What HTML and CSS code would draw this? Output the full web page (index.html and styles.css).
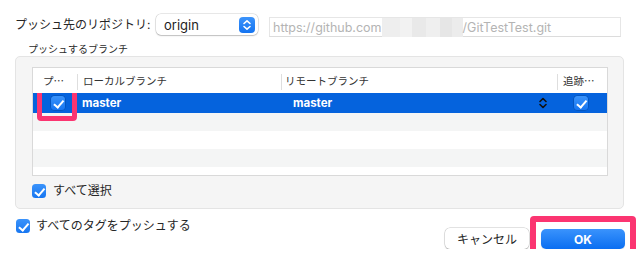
FILE: index.html
```html
<!DOCTYPE html>
<html lang="ja">
<head>
    <meta charset="UTF-8">
    <title>プッシュ</title>
    <link rel="stylesheet" href="styles.css">
</head>
<body>
    <div class="dialog">
        <div class="remote-row">
            <span class="label">プッシュ先のリポジトリ:</span>
            <div class="popup">
                <span>origin</span>
                <span class="stepper">
                    <svg width="16" height="16" viewBox="0 0 16 16">
                        <path d="M5 6.5 L8 3.8 L11 6.5 M5 9.5 L8 12.2 L11 9.5" fill="none" stroke="#fff" stroke-width="1.6" stroke-linecap="round" stroke-linejoin="round"/>
                    </svg>
                </span>
            </div>
            <div class="url-field">
                <span>https://github.com</span><span class="blur"></span><span>/GitTestTest.git</span>
            </div>
        </div>

        <div class="group-title">プッシュするブランチ</div>
        <div class="group">
            <div class="table">
                <div class="thead">
                    <div class="th">プ⋯</div>
                    <div class="th sep">ローカルブランチ</div>
                    <div class="th sep">リモートブランチ</div>
                    <div class="th sep">追跡⋯</div>
                </div>
                <div class="tbody">
                    <div class="tr selected">
                        <div class="td check-cell">
                            <span class="checkbox"></span>
                            <span class="mark mark-small"></span>
                        </div>
                        <div class="td name">master</div>
                        <div class="td name remote">
                            <span class="remote-name">master</span>
                            <svg width="8" height="12" viewBox="0 0 8 12">
                                <path d="M1 4.5 L4 1.5 L7 4.5 M1 7.5 L4 10.5 L7 7.5" fill="none" stroke="#111" stroke-width="1.6" stroke-linecap="round" stroke-linejoin="round"/>
                            </svg>
                        </div>
                        <div class="td check-cell track">
                            <span class="checkbox"></span>
                        </div>
                    </div>
                    <div class="tr stripe"></div>
                    <div class="tr"></div>
                    <div class="tr stripe"></div>
                    <div class="tr"></div>
                </div>
            </div>
            <label class="check-row">
                <span class="checkbox"></span>
                <span>すべて選択</span>
            </label>
        </div>

        <div class="footer">
            <label class="check-row tags">
                <span class="checkbox"></span>
                <span>すべてのタグをプッシュする</span>
            </label>
            <div class="buttons">
                <button class="btn cancel">キャンセル</button>
                <button class="btn ok">OK<span class="mark mark-big"></span></button>
            </div>
        </div>
    </div>
</body>
</html>
```

FILE: styles.css
```css
body {
    margin: 0;
    background: #ffffff;
    font-family: "Inter", "Noto Sans CJK JP", sans-serif;
    font-size: 12px;
    color: #262626;
}

.dialog {
    padding: 14px 16px 0 15px;
}

/* top row */
.remote-row {
    display: flex;
    align-items: flex-start;
    height: 28px;
}

.label {
    flex-shrink: 0;
    width: 141px;
    font-size: 12px;
    line-height: 21px;
    white-space: nowrap;
}

.popup {
    display: flex;
    align-items: center;
    justify-content: space-between;
    flex-shrink: 0;
    box-sizing: border-box;
    width: 102px;
    height: 21px;
    padding: 0 3px 0 8px;
    background: #fff;
    border-radius: 5px;
    box-shadow: 0 0 0 0.5px rgba(0, 0, 0, 0.18), 0 1px 1.5px rgba(0, 0, 0, 0.18);
    font-size: 13px;
    color: #1d1d1d;
}

.stepper {
    display: flex;
    width: 16px;
    height: 16px;
    border-radius: 4px;
    background: linear-gradient(#3c94fb, #1474f1);
}

.url-field {
    display: flex;
    align-items: center;
    box-sizing: border-box;
    width: 352px;
    height: 20px;
    margin: 3px 0 0 11px;
    padding-left: 3px;
    border: 1px solid #e6e6e6;
    border-bottom-color: #dcdcdc;
    color: #b4b4b4;
    font-size: 12.5px;
    white-space: nowrap;
}

.blur {
    display: inline-block;
    width: 81px;
    height: 19px;
    background: linear-gradient(90deg, #eeeeee 0, #eeeeee 18px, #f2f2f2 18px, #f2f2f2 30px, #e9e9e9 30px, #e9e9e9 44px, #efefef 44px, #efefef 58px, #e6e6e6 58px, #e6e6e6 70px, #ececec 70px);
}

/* group box */
.group-title {
    font-size: 10px;
    line-height: 14px;
    margin: 0 0 0 13px;
    color: #2a2a2a;
}

.group {
    margin-top: 0;
    height: 153px;
    box-sizing: border-box;
    margin-right: 1px;
    padding: 10px 15px 0 16px;
    background: #f5f5f5;
    border: 1px solid #e4e4e4;
    border-radius: 5px;
}

.table {
    border: 1px solid #d9d9d9;
    background: #fff;
}

.thead,
.tr {
    display: grid;
    grid-template-columns: 44px 204px 276px 1fr;
}

.thead {
    height: 25px;
}

.th {
    display: flex;
    align-items: center;
    padding-left: 10px;
    font-size: 10.5px;
    color: #333;
    white-space: nowrap;
    overflow: hidden;
}

.th.sep {
    padding-left: 6px;
    background: linear-gradient(#dedede, #dedede) left 6px / 1px 16px no-repeat;
}

.th.sep:nth-child(3) {
    padding-left: 4px;
}

.tbody {
    height: 82px;
    overflow: hidden;
}

.tr {
    height: 18px;
}

.tr.stripe {
    background: #f4f5f5;
}

.tr.selected {
    height: 20px;
    background: #0563dd;
    color: #fff;
    font-weight: 700;
    font-size: 11.5px;
}

.td {
    display: flex;
    align-items: center;
}

.name {
    padding-left: 5px;
}

.remote {
    padding-left: 12px;
    padding-right: 10px;
    justify-content: space-between;
}

.check-cell {
    position: relative;
    padding-left: 18px;
}

.track {
    padding-left: 17px;
}

/* checkbox */
.checkbox {
    position: relative;
    display: inline-block;
    flex-shrink: 0;
    box-sizing: border-box;
    width: 14px;
    height: 14px;
    border-radius: 3.5px;
    background: linear-gradient(#3a93fb, #1776f1);
}

.selected .checkbox {
    box-shadow: 0 0 0 0.5px rgba(0, 0, 0, 0.25);
}

.checkbox::after {
    content: "";
    position: absolute;
    left: 4.5px;
    top: 1.5px;
    width: 3.5px;
    height: 7.5px;
    border: solid #fff;
    border-width: 0 2px 2px 0;
    transform: rotate(40deg);
}

/* annotation frames */
.mark {
    position: absolute;
    border: 5px solid #fb3571;
    border-radius: 4px;
    box-sizing: border-box;
}

.mark-small {
    left: 4px;
    top: -8px;
    width: 40px;
    height: 36px;
}

.mark-big {
    left: -11px;
    top: -13px;
    width: 106px;
    height: 46px;
    border-width: 6px;
}

.check-row {
    display: flex;
    align-items: center;
    gap: 7px;
    margin-top: 7px;
    font-size: 12px;
    line-height: 16px;
    color: #262626;
}

/* footer */
.footer {
    display: flex;
    justify-content: space-between;
    align-items: flex-start;
    padding-left: 1px;
}

.check-row.tags {
    margin-top: 9px;
    gap: 6px;
}

.buttons {
    display: flex;
    gap: 12px;
    margin-top: 19px;
}

.btn {
    position: relative;
    width: 84px;
    height: 21px;
    border-radius: 5px;
    font-family: "Inter", "Noto Sans CJK JP", sans-serif;
    font-size: 12px;
    padding: 0;
}

.cancel {
    background: #fff;
    border: none;
    box-shadow: 0 0 0 0.5px rgba(0, 0, 0, 0.22), 0 1px 1.5px rgba(0, 0, 0, 0.15);
    color: #262626;
}

.ok {
    margin-top: 1px;
    height: 20px;
    border: none;
    background: linear-gradient(#3a93fc, #0a6ef1);
    color: #fff;
    font-weight: 700;
    box-shadow: 0 1px 1px rgba(0, 0, 0, 0.12);
}
```
